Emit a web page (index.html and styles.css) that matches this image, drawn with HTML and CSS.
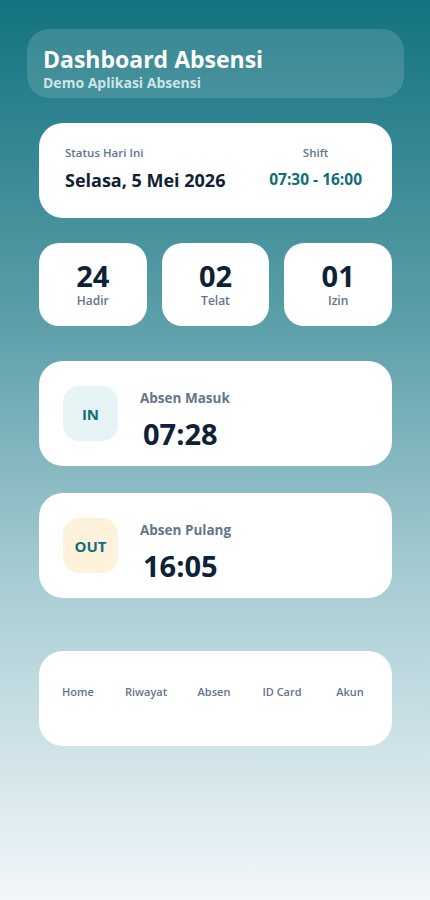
FILE: index.html
```
<!doctype html>
<html>
  <head>
    <title>Dashboard Absensi</title>
    <link rel="stylesheet" href="styles.css">
  </head>
  <body>
    <div class="app">
      <div class="header">
        <div class="title">Dashboard Absensi</div>
        <div class="subtitle">Demo Aplikasi Absensi</div>
      </div>

      <div class="card status">
        <div class="status-left">
          <div class="label">Status Hari Ini</div>
          <div class="date">Selasa, 5 Mei 2026</div>
        </div>
        <div class="status-right">
          <div class="label">Shift</div>
          <div class="shift">07:30 - 16:00</div>
        </div>
      </div>

      <div class="stats">
        <div class="stat"><div class="num">24</div><div class="stat-label">Hadir</div></div>
        <div class="stat"><div class="num">02</div><div class="stat-label">Telat</div></div>
        <div class="stat"><div class="num">01</div><div class="stat-label">Izin</div></div>
      </div>

      <div class="card absen absen-in">
        <div class="badge badge-in">IN</div>
        <div class="absen-info">
          <div class="absen-title">Absen Masuk</div>
          <div class="absen-time">07:28</div>
        </div>
      </div>

      <div class="card absen absen-out">
        <div class="badge badge-out">OUT</div>
        <div class="absen-info">
          <div class="absen-title">Absen Pulang</div>
          <div class="absen-time">16:05</div>
        </div>
      </div>

      <div class="card nav">
        <div class="nav-item">Home</div>
        <div class="nav-item">Riwayat</div>
        <div class="nav-item">Absen</div>
        <div class="nav-item">ID Card</div>
        <div class="nav-item">Akun</div>
      </div>
    </div>
  </body>
</html>
```

FILE: styles.css
```
html, body { height: 100%; }
body { margin: 0; font-family: "Open Sans", "Noto Sans", sans-serif; background: linear-gradient(to bottom, #137380 0%, #5a9ea8 35%, #a9cdd4 65%, #f2f7fa 100%); color: #0f2235; }

.app { padding: 29px 26px 0 27px; }

.header { background: rgba(255, 255, 255, 0.14); border-radius: 22px; height: 69px; box-sizing: border-box; padding: 17px 16px 0 16px; }
.title { color: #fff; font-size: 23px; font-weight: 700; line-height: 26px; }
.subtitle { color: #cfe4e7; font-size: 14px; font-weight: 700; line-height: 16px; margin-top: 3px; }

.card { background: #fff; border-radius: 24px; margin: 0 12px; box-sizing: border-box; }

.status { margin-top: 25px; height: 95px; display: flex; justify-content: space-between; align-items: flex-start; padding: 22px 30px 0 26px; }
.label { font-size: 11.5px; font-weight: 600; color: #64748b; line-height: 16px; }
.date { font-size: 18px; font-weight: 700; margin-top: 7px; line-height: 24px; }
.status-right { text-align: center; }
.shift { font-size: 15.5px; font-weight: 700; color: #0f6e78; margin-top: 7px; line-height: 22px; }

.stats { display: grid; grid-template-columns: repeat(3, 1fr); gap: 15px; margin: 25px 12px 0 12px; }
.stat { background: #fff; border-radius: 20px; height: 83px; display: flex; flex-direction: column; align-items: center; justify-content: center; }
.num { font-size: 29px; font-weight: 700; line-height: 30px; }
.stat-label { font-size: 12px; font-weight: 600; color: #64748b; line-height: 14px; margin-top: 3px; }

.absen { height: 105px; display: flex; align-items: center; padding-left: 24px; }
.absen-in { margin-top: 35px; }
.absen-out { margin-top: 27px; }
.badge { width: 55px; height: 55px; border-radius: 16px; display: flex; align-items: center; justify-content: center; font-size: 15px; font-weight: 700; color: #0f6e78; }
.badge-in { background: #e6f4f6; }
.badge-out { background: #fff2da; }
.absen-info { margin-left: 22px; padding-top: 12px; }
.absen-title { font-size: 13.5px; font-weight: 700; color: #64748b; line-height: 18px; }
.absen-time { font-size: 29px; font-weight: 700; line-height: 34px; margin-top: 10px; margin-left: 3px; }

.nav { margin-top: 53px; height: 95px; display: grid; grid-template-columns: repeat(5, 1fr); padding: 33px 8px 0 5px; align-items: start; }
.nav-item { text-align: center; font-size: 11px; font-weight: 600; color: #64748b; line-height: 16px; }
```
